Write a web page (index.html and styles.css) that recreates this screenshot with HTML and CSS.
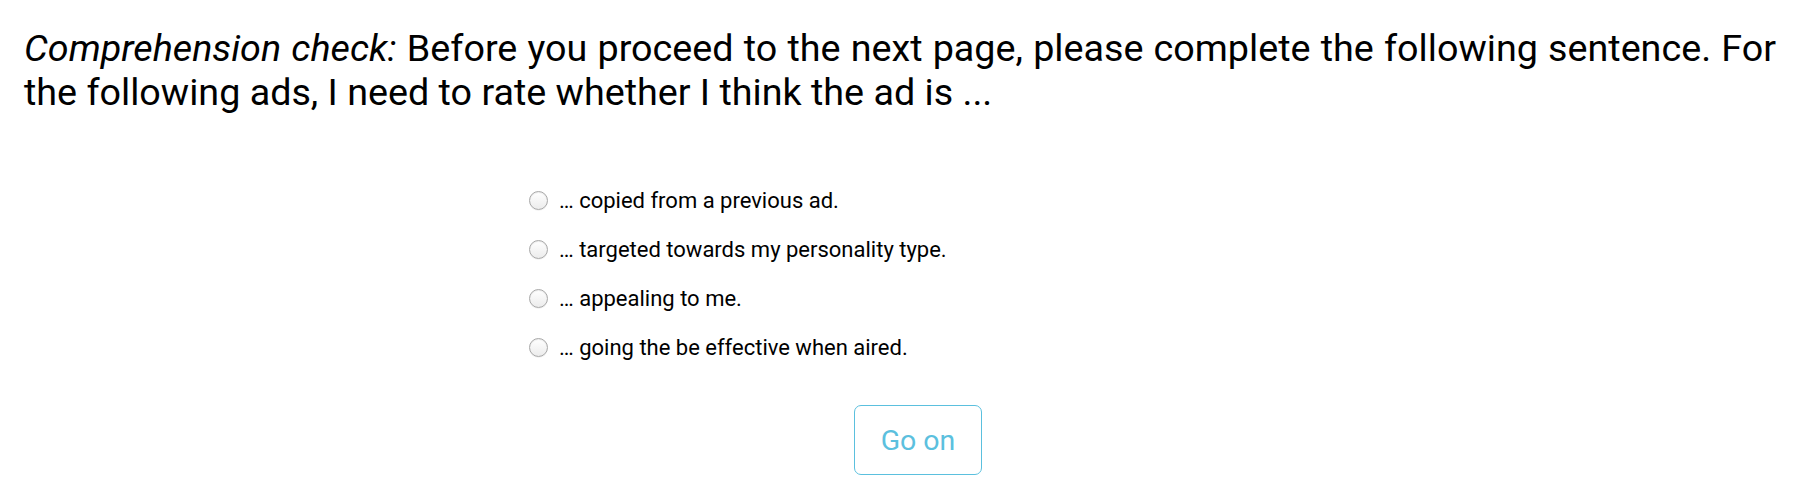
FILE: index.html
```html
<!DOCTYPE html>
<html>
<head>
<meta charset="utf-8">
<link rel="stylesheet" href="styles.css">
</head>
<body>
<main class="page">
  <p class="question"><em>Comprehension check:</em> Before you proceed to the next page, please complete the following sentence. For the following ads, I need to rate whether I think the ad is ...</p>
  <div class="options">
    <label class="option"><input type="radio" name="cc" class="radio"><span>… copied from a previous ad.</span></label>
    <label class="option"><input type="radio" name="cc" class="radio"><span>… targeted towards my personality type.</span></label>
    <label class="option"><input type="radio" name="cc" class="radio"><span>… appealing to me.</span></label>
    <label class="option"><input type="radio" name="cc" class="radio"><span>… going the be effective when aired.</span></label>
  </div>
  <div class="actions">
    <button class="btn-go" type="button">Go on</button>
  </div>
</main>
</body>
</html>
```

FILE: styles.css
```css
html, body {
  margin: 0;
  padding: 0;
  background: #fff;
}
body {
  font-family: Roboto, "Liberation Sans", sans-serif;
  color: #000;
}
.page {
  padding: 26px 8px 0 24px;
}
.question {
  margin: 0 36px 0 0;
  font-size: 37.7px;
  line-height: normal;
  text-align: justify;
}
.question em {
  font-style: italic;
}
.options {
  width: 778px;
  margin: 62px auto 0;
  display: flex;
  flex-direction: column;
}
.option {
  height: 49px;
  display: flex;
  align-items: center;
  gap: 11px;
  font-size: 22px;
  cursor: pointer;
}
.radio {
  appearance: none;
  -webkit-appearance: none;
  margin: 0;
  width: 19px;
  height: 19px;
  border-radius: 50%;
  border: 1px solid #a8a8a8;
  background: linear-gradient(#ffffff, #ececec);
  box-shadow: inset 0 1px 1px rgba(0,0,0,0.08), 0 1px 0 rgba(0,0,0,0.05);
  flex: none;
}
.actions {
  display: flex;
  justify-content: center;
  margin-top: 33px;
}
.btn-go {
  width: 128px;
  height: 70px;
  border: 1px solid #5bc0de;
  border-radius: 7px;
  background: #fff;
  color: #5bc0de;
  font-family: Roboto, "Liberation Sans", sans-serif;
  font-size: 28.5px;
  padding: 0;
}
```
